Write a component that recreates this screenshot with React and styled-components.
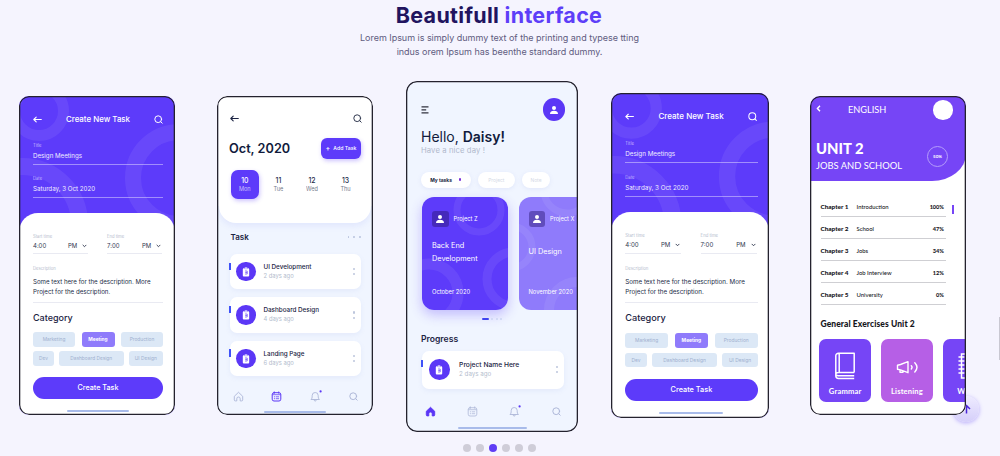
import React from "react";
import styled, { createGlobalStyle, css } from "styled-components";

const Global = createGlobalStyle`
  * { box-sizing: border-box; }
  body { margin: 0; background: #f5f4fe; overflow: hidden; font-family: Inter, "Open Sans", sans-serif; color: #1b2343; }
  h1, h2, h3, p { margin: 0; font-weight: inherit; }
  svg { display: block; flex: none; }
`;

/* ---------- shared ---------- */
const Page = styled.main`
  position: relative;
  width: 1000px;
  height: 456px;
  overflow: hidden;
`;
const Heading = styled.h1`
  height: 31px;
  padding-right: 2px;
  line-height: 30px;
  text-align: center;
  font-size: 21.500px;
  font-weight: 700;
  letter-spacing: 0.3px;
  color: #21145f;
  span { color: #5d3ef8; }
`;
const Intro = styled.p`
  height: 50px;
  padding-right: 1px;
  text-align: center;
  font-size: 9px;
  line-height: 14.3px;
  color: #5f5c80;
  letter-spacing: -0.03px;
`;
const Carousel = styled.section`
  display: flex;
  align-items: flex-start;
  height: 351px;
`;
const Phone = styled.article`
  position: relative;
  z-index: 1;
  flex: none;
  overflow: hidden;
  width: ${(p) => p.$w}px;
  height: ${(p) => p.$h}px;
  margin: ${(p) => p.$top}px 0 0 ${(p) => p.$left}px;
  border-radius: ${(p) => p.$r || 10}px;
  background: ${(p) => p.$bg};
  white-space: nowrap;
  &::after {
    content: "";
    position: absolute;
    inset: 0;
    box-shadow: inset 0 0 0 1.3px #24222e;
    border-radius: inherit;
    pointer-events: none;
  }
`;
const Line = styled.div`
  font-size: ${(p) => p.$size}px;
  line-height: ${(p) => p.$lh}px;
  font-weight: ${(p) => p.$weight || 400};
  letter-spacing: ${(p) => p.$ls || 0}px;
  color: ${(p) => p.$color || "inherit"};
`;
const HomeBar = styled.div`
  width: ${(p) => p.$w}px;
  height: 2px;
  margin: ${(p) => p.$mt}px auto 0;
  border-radius: 1px;
  background: #a8bbea;
`;

const Back = ({ color }) => (
  <svg width="9" height="7" viewBox="0 0 9 7" fill="none" stroke={color} strokeWidth="1.1" strokeLinecap="round" strokeLinejoin="round">
    <path d="M8.3 3.5H.8M3.2 1.2.8 3.5l2.4 2.3" />
  </svg>
);
const Search = ({ color, size = 9 }) => (
  <svg width={size} height={size} viewBox="0 0 9 9" fill="none" stroke={color} strokeWidth="1" strokeLinecap="round">
    <circle cx="4.2" cy="4.2" r="3.4" />
    <path d="m6.8 6.8 1.4 1.4" />
  </svg>
);
const Person = ({ size }) => (
  <svg width={size} height={size} viewBox="0 0 10 10" fill="#fff">
    <circle cx="5" cy="3" r="2" />
    <path d="M1 9c0-2.200 1.600-3.300 4-3.300S9 6.800 9 9Z" />
  </svg>
);
const Clipboard = () => (
  <svg width="8" height="10" viewBox="0 0 8 10">
    <path d="M1.800 1.200h4.400a1 1 0 0 1 1 1v6.300a1 1 0 0 1-1 1H1.800a1 1 0 0 1-1-1V2.200a1 1 0 0 1 1-1Z" fill="#fff" />
    <path d="M2.700.2h2.600v1.700H2.700z" fill="#fff" stroke="#5b37f6" strokeWidth=".35" />
    <path d="M3 4h2.200v3H3M3.200 5.500h2" stroke="#5b37f6" strokeWidth=".65" fill="none" />
  </svg>
);

/* ---------- create task screen ---------- */
const Rings = styled.svg`
  position: absolute;
  left: 0;
  top: 0;
  fill: none;
  stroke: rgba(255, 255, 255, 0.07);
`;
const TaskScreen = styled.div`
  zoom: ${(p) => p.$zoom || 1};
  position: relative;
`;
const TaskTop = styled.header`
  position: relative;
  height: 116.500px;
  padding: 17px 12px 0 14px;
  color: #fff;
`;
const TopBar = styled.div`
  display: flex;
  align-items: center;
  justify-content: space-between;
  height: 13px;
`;
const Field = styled.div`
  width: 130px;
  height: 23px;
  margin-top: ${(p) => p.$mt}px;
  border-bottom: 1px solid rgba(255, 255, 255, 0.42);
`;
const Sheet = styled.div`
  position: relative;
  height: 204px;
  padding: 20px 12px 0 14px;
  border-radius: 19px 19px 0 0;
  background: #fff;
`;
const Times = styled.div`
  display: flex;
  gap: 19px;
`;
const Time = styled.div`
  width: 55px;
  height: 21.500px;
  border-bottom: 1px solid #e9eaf2;
`;
const TimeValue = styled.div`
  display: flex;
  align-items: center;
  font-size: 6px;
  line-height: 12px;
  color: #30384f;
  span:first-child { width: 35px; }
  svg { margin-left: 5px; }
`;
const Description = styled.div`
  width: 130px;
  height: 37.500px;
  margin-top: 11px;
  border-bottom: 1px solid #e9eaf2;
`;
const Copy = styled.p`
  margin-top: 5px;
  font-size: 6.150px;
  line-height: 10px;
  color: #232c48;
`;
const Chips = styled.div`
  display: flex;
  justify-content: space-between;
  width: 130px;
  margin-top: ${(p) => p.$mt}px;
`;
const Chip = styled.span`
  width: ${(p) => p.$w}px;
  height: 14.500px;
  border-radius: 3px;
  text-align: center;
  font-size: 4.800px;
  line-height: 14.500px;
  background: #dce8f6;
  color: #9fb0cf;
  ${(p) => p.$on && css`
    background: #8f7bfb;
    color: #fff;
    font-weight: 700;
  `}
`;
const Submit = styled.button`
  display: block;
  width: 130px;
  height: 22.500px;
  margin: 11px 0 0;
  padding: 0;
  border: 0;
  border-radius: 12px;
  background: #5d3bfa;
  color: #fff;
  font: 500 7.200px/22px Inter, sans-serif;
`;

const Chevron = () => (
  <svg width="5" height="4" viewBox="0 0 5 4" fill="none" stroke="#30384f" strokeWidth=".9">
    <path d="m.7.900 1.800 1.800L4.300.9" />
  </svg>
);

function CreateTask({ zoom }) {
  return (
    <TaskScreen $zoom={zoom}>
      <Rings width="156" height="140">
        <circle cx="20" cy="15" r="24.500" strokeWidth="11" />
        <circle cx="160" cy="82" r="46" strokeWidth="16" />
        <circle cx="3" cy="128" r="57.500" strokeWidth="17" />
      </Rings>
      <TaskTop>
        <TopBar>
          <Back color="#fff" />
          <Line $size={7.900} $lh={13} $weight={500}>Create New Task</Line>
          <Search color="#fff" />
        </TopBar>
        <Field $mt={16}>
          <Line $size={4.200} $lh={8} $color="#c3b8ff">Title</Line>
          <Line $size={6.200} $lh={12} $color="#f0edff">Design Meetings</Line>
        </Field>
        <Field $mt={10.300}>
          <Line $size={4.200} $lh={8} $color="#c3b8ff">Date</Line>
          <Line $size={6.200} $lh={12} $color="#f0edff">Saturday, 3 Oct 2020</Line>
        </Field>
      </TaskTop>
      <Sheet>
        <Times>
          {[["Start time", "4:00"], ["End time", "7:00"]].map(([label, value]) => (
            <Time key={label}>
              <Line $size={4.200} $lh={7} $color="#b5bccd">{label}</Line>
              <TimeValue><span>{value}</span><span>PM</span><Chevron /></TimeValue>
            </Time>
          ))}
        </Times>
        <Description>
          <Line $size={4.200} $lh={7} $color="#b5bccd">Description</Line>
          <Copy>Some text here for the description. More<br />Project for the description.</Copy>
        </Description>
        <Line as="h3" $size={9} $lh={30} $weight={500}>Category</Line>
        <Chips $mt={-0.500}>
          <Chip $w={42}>Marketing</Chip>
          <Chip $w={33} $on>Meeting</Chip>
          <Chip $w={42}>Production</Chip>
        </Chips>
        <Chips $mt={4.500}>
          <Chip $w={21}>Dev</Chip>
          <Chip $w={64.500}>Dashboard Design</Chip>
          <Chip $w={34.500}>UI Design</Chip>
        </Chips>
        <Submit>Create Task</Submit>
        <HomeBar $w={62} $mt={10.700} />
      </Sheet>
    </TaskScreen>
  );
}

/* ---------- bottom navigation ---------- */
const NavBar = styled.nav`
  display: flex;
  justify-content: space-between;
  align-items: center;
  height: 12px;
  margin: ${(p) => p.$m};
`;
const HomeIcon = ({ on }) => (
  <svg width="11" height="11" viewBox="0 0 11 11" fill={on ? "#5b37f6" : "none"} stroke={on ? "#5b37f6" : "#adb7d8"} strokeWidth=".9" strokeLinejoin="round">
    <path d="M1.300 5.300 5.500 1.300l4.200 4v3.600a1 1 0 0 1-1 1H7.200V7.700a1.700 1.700 0 0 0-3.400 0v2.200H2.300a1 1 0 0 1-1-1Z" />
  </svg>
);
const CalendarIcon = ({ on }) => (
  <svg width="11" height="11" viewBox="0 0 11 11" fill="none" stroke={on ? "#5b37f6" : "#adb7d8"} strokeWidth={on ? 1 : 0.800} strokeLinecap="round">
    <rect x="1.200" y="1.700" width="8.600" height="8.300" rx="1.800" />
    <path d="M3.300.8v1.500M7.700.8v1.500M1.500 3.700h8M3.300 5.800h.5M5.300 5.800h2.400M3.300 7.700h.5M5.300 7.700h2.400" strokeWidth=".75" />
  </svg>
);
const BellIcon = () => (
  <svg width="13" height="13" viewBox="0 0 13 13" fill="none" stroke="#adb7d8" strokeWidth=".9" strokeLinejoin="round">
    <path d="M2 9.500c1-.9 1.200-1.900 1.200-4a3 3 0 0 1 6 0c0 2.100.2 3.100 1.200 4ZM5 9.700c.2 1.800 2.200 1.800 2.500 0" />
    <circle cx="11.600" cy="1.400" r="1.100" fill="#5b37f6" stroke="none" />
  </svg>
);
const Nav = ({ active, m }) => (
  <NavBar $m={m}>
    <HomeIcon on={active === "home"} />
    <CalendarIcon on={active === "calendar"} />
    <BellIcon />
    <Search color="#adb7d8" size={9} />
  </NavBar>
);

/* ---------- list rows ---------- */
const TaskCard = styled.div`
  position: relative;
  display: flex;
  align-items: center;
  width: ${(p) => p.$w}px;
  height: ${(p) => p.$h}px;
  margin: ${(p) => p.$m};
  padding: 0 6px 0 ${(p) => p.$pl}px;
  border-radius: 7px;
  background: #fff;
  box-shadow: 0 2px 5px rgba(130, 150, 220, 0.1);
  &::before {
    content: "";
    position: absolute;
    left: -1px;
    top: 8.500px;
    width: 2px;
    height: 7.500px;
    background: #3f52f8;
  }
`;
const Disc = styled.div`
  display: grid;
  place-items: center;
  flex: none;
  width: ${(p) => p.$d}px;
  height: ${(p) => p.$d}px;
  border-radius: 50%;
  background: #5b37f6;
`;
const TaskInfo = styled.div`
  flex: 1;
  margin-left: ${(p) => p.$ml}px;
`;
const More = styled.div`
  display: grid;
  gap: 3px;
  i { width: 2.200px; height: 2.200px; border-radius: 50%; background: #bdc6dc; }
`;
function TaskRow({ w, h, m, d, pl, gap, size, title, age }) {
  return (
    <TaskCard $w={w} $h={h} $m={m} $pl={pl}>
      <Disc $d={d}><Clipboard /></Disc>
      <TaskInfo $ml={gap}>
        <Line $size={size} $lh={9} $weight={500}>{title}</Line>
        <Line $size={size - 0.500} $lh={8.500} $color="#b3bccd">{age}</Line>
      </TaskInfo>
      <More><i /><i /></More>
    </TaskCard>
  );
}

/* ---------- calendar screen ---------- */
const CalendarTop = styled.header`
  height: 127px;
  margin: 0 2px;
  padding: 16px 9px 0 11px;
  border-radius: 0 0 17px 17px;
  background: #fff;
  box-shadow: 0 3px 6px rgba(120, 140, 240, 0.13);
`;
const MonthRow = styled.div`
  display: flex;
  justify-content: space-between;
  align-items: center;
  height: 21px;
  margin: 13px 1px 0 -1px;
`;
const AddTask = styled.button`
  width: 40px;
  height: 21px;
  padding: 0;
  border: 0;
  border-radius: 6px;
  background: #5d3bfa;
  box-shadow: 1px 2px 4px rgba(93, 59, 250, 0.3);
  color: #fff;
  font: 500 5.200px/20px Inter, sans-serif;
  span { margin-right: 3px; font-size: 7px; vertical-align: -0.500px; }
`;
const Days = styled.div`
  display: flex;
  gap: 6px;
  margin: 10.500px 0 0 1px;
`;
const Day = styled.div`
  width: 27.600px;
  height: 29.500px;
  padding-top: 6px;
  border-radius: 7px;
  text-align: center;
  color: #232b49;
  ${(p) => p.$on && css`
    background: #5d3bfa;
    box-shadow: 1px 2px 4px rgba(93, 59, 250, 0.3);
    color: #fff;
  `}
`;
const DayName = styled.div`
  font-size: 5.600px;
  line-height: 8px;
  opacity: 0.65;
`;
const SectionHead = styled.div`
  display: flex;
  justify-content: space-between;
  align-items: center;
  height: 12px;
  margin: 8px 12px 11px 13.500px;
`;
const Dots = styled.div`
  display: flex;
  gap: 4px;
  i { width: 1.800px; height: 1.800px; border-radius: 50%; background: #b9c4df; }
`;

function CalendarScreen() {
  return (
    <>
      <CalendarTop>
        <TopBar>
          <Back color="#1b2343" />
          <Search color="#30384f" />
        </TopBar>
        <MonthRow>
          <Line as="h2" $size={12.700} $lh={23} $weight={600} $color="#111b3d">Oct, 2020</Line>
          <AddTask><span>+</span>Add Task</AddTask>
        </MonthRow>
        <Days>
          {[["10", "Mon"], ["11", "Tue"], ["12", "Wed"], ["13", "Thu"]].map(([n, name], i) => (
            <Day key={n} $on={i === 0}>
              <Line $size={6.900} $lh={9} $weight={500}>{n}</Line>
              <DayName>{name}</DayName>
            </Day>
          ))}
        </Days>
      </CalendarTop>
      <SectionHead>
        <Line as="h3" $size={8} $lh={13} $weight={600}>Task</Line>
        <Dots><i /><i /><i /></Dots>
      </SectionHead>
      {[["UI Development", "2 days ago"], ["Dashboard Design", "4 days ago"], ["Landing Page", "6 days ago"]].map(([title, age]) => (
        <TaskRow key={title} w={131} h={35.300} m="0 0 8.200px 13px" d={19.500} pl={6} gap={8} size={6.300} title={title} age={age} />
      ))}
      <Nav active="calendar" m="14px 15px 0 15.500px" />
      <HomeBar $w={62} $mt={8.700} />
    </>
  );
}

/* ---------- home screen ---------- */
const HomeScreen = styled.div`
  padding: 17px 0 0 15px;
`;
const HomeTop = styled.div`
  display: flex;
  justify-content: space-between;
  align-items: center;
  height: 23px;
  padding-right: 13px;
`;
const Greeting = styled.h2`
  margin-top: 6px;
  font-size: 14px;
  line-height: 20px;
  color: #111b3d;
  b { font-weight: 600; }
`;
const Pills = styled.div`
  display: flex;
  gap: 7px;
  margin-top: 17px;
`;
const Pill = styled.span`
  display: flex;
  align-items: center;
  justify-content: center;
  gap: 7px;
  width: ${(p) => p.$w}px;
  height: 16px;
  border-radius: 8px;
  background: #fff;
  box-shadow: 0 1px 4px rgba(120, 140, 220, 0.13);
  font-size: 4.900px;
  font-weight: ${(p) => (p.$on ? 700 : 400)};
  color: ${(p) => (p.$on ? "#20233c" : "#d4d9e6")};
  i { width: 2.400px; height: 2.400px; border-radius: 50%; background: #7a32d8; }
`;
const Projects = styled.div`
  display: flex;
  gap: 10.500px;
  margin: 9.500px 0 0 1px;
`;
const Project = styled.div`
  position: relative;
  flex: none;
  overflow: hidden;
  width: 86px;
  height: 113px;
  padding: 13.500px 10px 0;
  border-radius: 12px;
  background: ${(p) => p.$bg};
  color: #fff;
`;
const ProjectShadow = styled.div`
  flex: none;
  border-radius: 12px;
  box-shadow: ${(p) => (p.$on ? "0 5px 12px rgba(93, 59, 250, 0.3)" : "none")};
`;
const ProjectHead = styled.div`
  position: relative;
  display: flex;
  align-items: center;
  gap: 5px;
`;
const Badge = styled.div`
  display: grid;
  place-items: center;
  width: 16.500px;
  height: 16px;
  border-radius: 3px;
  background: rgba(40, 20, 110, 0.45);
`;
const ProjectName = styled.div`
  position: relative;
  display: flex;
  flex-direction: column;
  justify-content: center;
  height: 27px;
  margin: 12px 0 19px;
  font-size: 7.300px;
  line-height: 13.500px;
`;
const ProjectDate = styled.div`
  position: relative;
  font-size: 5.800px;
  line-height: 14px;
`;
const Pager = styled.div`
  display: flex;
  align-items: center;
  gap: 2.500px;
  height: 3px;
  margin: 7px 0 0 61px;
  i { width: 2px; height: 2px; border-radius: 1px; background: #cbd5f2; }
  i:first-child { width: 6.500px; background: #3f43f0; }
`;

function ProjectCard({ on, bg, badge, name, date }) {
  return (
    <ProjectShadow $on={on}>
      <Project $bg={bg}>
        <Rings width="86" height="113">
          {on ? (
            <>
              <circle cx="57" cy="13" r="22" strokeWidth="7" />
              <circle cx="92" cy="82" r="27" strokeWidth="9" />
              <circle cx="7" cy="96" r="29" strokeWidth="11" />
            </>
          ) : (
            <>
              <circle cx="48" cy="-7" r="23" strokeWidth="7" />
              <circle cx="-8" cy="50" r="21" strokeWidth="7" />
              <circle cx="58" cy="113" r="28" strokeWidth="10" />
            </>
          )}
        </Rings>
        <ProjectHead>
          <Badge><Person size={10} /></Badge>
          <Line $size={5.700} $lh={10}>{badge}</Line>
        </ProjectHead>
        <ProjectName>{name}</ProjectName>
        <ProjectDate>{date}</ProjectDate>
      </Project>
    </ProjectShadow>
  );
}

function Home() {
  return (
    <HomeScreen>
      <HomeTop>
        <svg width="8" height="8" viewBox="0 0 8 8" stroke="#30323f" strokeWidth="1.200">
          <path d="M.5.800h7M.5 3.800h4.700M.5 6.800h7" />
        </svg>
        <Disc $d={22.500}><Person size={10} /></Disc>
      </HomeTop>
      <Greeting>Hello, <b>Daisy!</b></Greeting>
      <Line $size={7.700} $lh={7.500} $ls={0.100} $color="#b0b9cc">Have a nice day !</Line>
      <Pills>
        <Pill $w={49.500} $on>My tasks<i /></Pill>
        <Pill $w={37.500}>Project</Pill>
        <Pill $w={28}>Note</Pill>
      </Pills>
      <Projects>
        <ProjectCard on bg="#5d3bfa" badge="Project Z" name={<>Back End<br />Development</>} date="October 2020" />
        <ProjectCard bg="#8f7bfb" badge="Project X" name="UI Design" date="November 2020" />
      </Projects>
      <Pager><i /><i /><i /><i /></Pager>
      <Line as="h3" $size={8.600} $lh={38} $weight={600}>Progress</Line>
      <TaskRow w={142} h={37.500} m="-7px 0 0 1px" d={20.600} pl={7} gap={9.500} size={6.700} title="Project Name Here" age="2 days ago" />
      <Nav active="home" m="17px 17px 0 4px" />
    </HomeScreen>
  );
}

/* ---------- course screen ---------- */
const Course = styled.div`
  font-family: Lato, sans-serif;
  color: #16161c;
`;
const CourseTop = styled.header`
  height: 85px;
  padding: 4px 13.500px 0 6.500px;
  border-radius: 0 0 34px 0 / 0 0 27px 0;
  background: #7645f6;
  color: #fff;
`;
const CourseBar = styled.div`
  display: flex;
  align-items: center;
  height: 20px;
  h2 { flex: 1; margin: -1px 0 0 27px; }
  svg { margin-top: -3px; }
`;
const Photo = styled.div`
  width: 19.500px;
  height: 19.500px;
  border-radius: 50%;
  background: #fff;
`;
const Unit = styled.div`
  display: flex;
  justify-content: space-between;
  align-items: center;
  margin-top: 18px;
`;
const Score = styled.div`
  width: 21px;
  height: 21px;
  margin: 1px 4.500px 0 0;
  border: 1px solid #b59dfb;
  border-radius: 50%;
  text-align: center;
  font-size: 4.500px;
  font-weight: 700;
  line-height: 19px;
`;
const Chapters = styled.div`
  display: flex;
  padding: 14px 0 0 11px;
`;
const Chapter = styled.div`
  display: flex;
  width: 125px;
  height: 22px;
  padding: 6px 1.500px 0 0;
  border-bottom: 1px solid #cfcfd3;
  font-size: 6px;
  line-height: 12px;
  font-weight: 500;
  b { font-weight: 900; }
  b:first-child { width: 36px; font-size: 6.400px; }
  span { flex: 1; font-size: 5.900px; }
  b:last-child { font-size: 5.600px; }
`;
const ScrollMark = styled.div`
  width: 2px;
  height: 9px;
  margin: 10px 0 0 6.500px;
  background: #7645f6;
`;
const ExercisesTitle = styled.h3`
  height: 34px;
  padding: 2px 0 0 11px;
  font-size: 8.500px;
  line-height: 34px;
  font-weight: 900;
  letter-spacing: 0.080px;
`;
const Exercises = styled.div`
  display: flex;
  gap: 9.500px;
  padding-left: 9.500px;
`;
const Exercise = styled.div`
  display: flex;
  flex-direction: column;
  flex: none;
  align-items: center;
  width: 52.300px;
  height: 62.500px;
  padding-top: 11px;
  border-radius: 7px;
  background: ${(p) => p.$bg};
  color: #fff;
`;
const ExerciseName = styled.div`
  font-size: 7.600px;
  line-height: 19px;
  font-weight: 700;
  letter-spacing: 0.150px;
`;

const Book = () => (
  <svg width="22" height="32" viewBox="0 0 22 32" fill="none" stroke="#fff" strokeWidth="1.500" strokeLinejoin="round">
    <path d="M20.200 22.500V3.300H4.600C2.800 3.300 1.800 4.300 1.800 5.700v20.100c0 1.700 1 2.700 2.800 2.700h15.600M20.200 22.500H4.600c-3.700 0-3.700 3.200-.4 3.200h16M5.200 3.300v19" />
  </svg>
);
const Speaker = () => (
  <svg width="22" height="32" viewBox="0 0 22 32" fill="none" stroke="#fff" strokeWidth="1.400" strokeLinejoin="round" strokeLinecap="round">
    <path d="M1.500 15.200 4.500 14.500 12 11.700v11L4.500 19.900l-3-.700ZM4 20v2.300h3v-1.400" />
    <path d="M15.300 15.700c.9 1 .9 2.300 0 3.300M18.800 12.800c2.700 2.800 2.700 6.300 0 9.100" />
  </svg>
);
const Notebook = () => (
  <svg width="22" height="32" viewBox="0 0 22 32" fill="none" stroke="#fff" strokeWidth="1.500" strokeLinecap="round">
    <path d="M3.500 4h17v24h-17zM1 7h5M1 11h5M1 15h5M1 19h5M1 23h5" />
  </svg>
);

function CourseScreen() {
  const chapters = [["Introduction", 100], ["School", 47], ["Jobs", 34], ["Job Interview", 12], ["University", 0]];
  return (
    <Course>
      <CourseTop>
        <CourseBar>
          <svg width="5" height="7" viewBox="0 0 5 7" fill="none" stroke="#fff" strokeWidth="1.400"><path d="M4 .8 1.400 3.500 4 6.200" /></svg>
          <Line as="h2" $size={9.200} $lh={12}>ENGLISH</Line>
          <Photo />
        </CourseBar>
        <Unit>
          <div>
            <Line $size={14.800} $lh={20} $weight={900}>UNIT 2</Line>
            <Line $size={9.400} $lh={15}>JOBS AND SCHOOL</Line>
          </div>
          <Score>50%</Score>
        </Unit>
      </CourseTop>
      <Chapters>
        <div>
          {chapters.map(([name, pct], i) => (
            <Chapter key={name}><b>Chapter {i + 1}</b><span>{name}</span><b>{pct}%</b></Chapter>
          ))}
        </div>
        <ScrollMark />
      </Chapters>
      <ExercisesTitle>General Exercises Unit 2</ExercisesTitle>
      <Exercises>
        <Exercise $bg="#7645f6"><Book /><ExerciseName>Grammar</ExerciseName></Exercise>
        <Exercise $bg="#b65fe6"><Speaker /><ExerciseName>Listening</ExerciseName></Exercise>
        <Exercise $bg="#7645f6"><Notebook /><ExerciseName>Words</ExerciseName></Exercise>
      </Exercises>
    </Course>
  );
}

/* ---------- page furniture ---------- */
const SlideDots = styled.div`
  display: flex;
  justify-content: center;
  gap: 5.200px;
  margin-top: 12.300px;
  padding-right: 1px;
`;
const SlideDot = styled.i`
  width: 8px;
  height: 8px;
  border-radius: 50%;
  background: ${(p) => (p.$on ? "#5f3df5" : "#cfcdd8")};
`;
const ToTop = styled.button`
  position: absolute;
  left: 953px;
  top: 396px;
  display: grid;
  place-items: center;
  width: 26px;
  height: 26px;
  padding: 0;
  border: 0;
  border-radius: 50%;
  background: linear-gradient(#eeebff, #d5cffa);
  box-shadow: 0 1px 4px rgba(93, 62, 248, 0.4);
`;
const ScrollThumb = styled.div`
  position: absolute;
  right: 0;
  top: 317px;
  width: 1px;
  height: 43px;
  background: #c9c8d2;
`;

export default function App() {
  return (
    <Page>
      <Global />
      <Heading>Beautifull <span>interface</span></Heading>
      <Intro>Lorem Ipsum is simply dummy text of the printing and typese tting<br />indus orem Ipsum has beenthe standard dummy.</Intro>
      <Carousel>
        <Phone $w={156} $h={319} $top={15} $left={19} $bg="#5d3bfa"><CreateTask /></Phone>
        <Phone $w={156} $h={319} $top={15} $left={42} $bg="linear-gradient(#fff 110px, #f0f5ff 110px)"><CalendarScreen /></Phone>
        <Phone $w={172} $h={351} $top={0} $left={33} $r={11} $bg="#f0f5ff">
          <Home />
          <HomeBar $w={69} $mt={9.500} />
        </Phone>
        <Phone $w={158} $h={325} $top={12} $left={33} $bg="#5d3bfa"><CreateTask zoom={1.018} /></Phone>
        <Phone $w={156.500} $h={319} $top={15} $left={40.500} $bg="#fff"><CourseScreen /></Phone>
      </Carousel>
      <SlideDots>
        {[0, 1, 2, 3, 4, 5].map((i) => <SlideDot key={i} $on={i === 2} />)}
      </SlideDots>
      <ToTop>
        <svg width="9" height="10" viewBox="0 0 9 10" fill="none" stroke="#4a25d8" strokeWidth="1.500"><path d="M4.500 9.500V1.500M1 5l3.500-3.500L8 5" /></svg>
      </ToTop>
      <ScrollThumb />
    </Page>
  );
}
